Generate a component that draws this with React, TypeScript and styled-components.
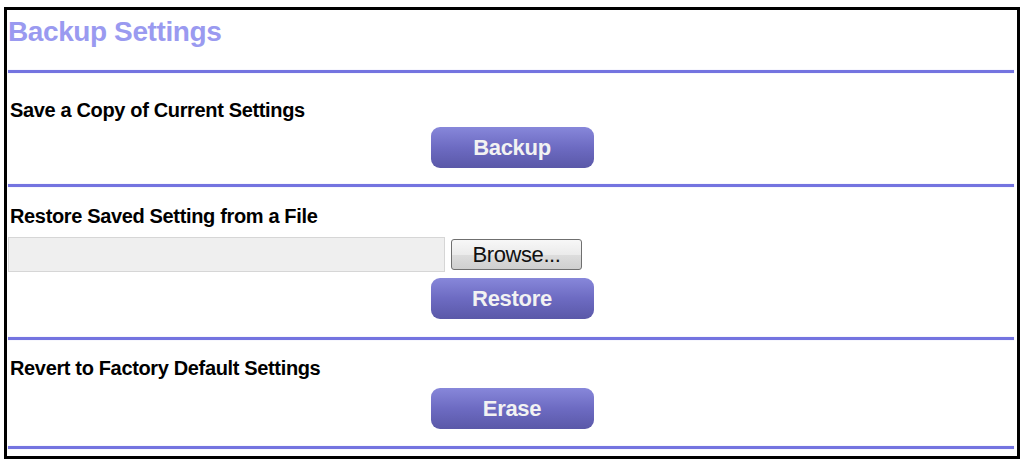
import React from "react";
import styled, { createGlobalStyle } from "styled-components";

const GlobalStyle = createGlobalStyle`
  html, body {
    margin: 0;
    padding: 0;
    background: #ffffff;
  }
  body {
    font-family: "Liberation Sans", Arial, sans-serif;
  }
`;

const Frame = styled.div`
  margin: 7px 0 0 4px;
  width: 1016px;
  box-sizing: border-box;
  border: 3px solid #000;
  background: #fff;
  padding: 0 3px 7px 1px;
`;

const TitleBar = styled.div`
  height: 60px;
  box-sizing: border-box;
  padding-top: 8px;
`;

const Title = styled.h1`
  margin: 0;
  font-size: 28px;
  line-height: 28px;
  letter-spacing: -0.4px;
  font-weight: bold;
  color: #9a9af0;
`;

const Rule = styled.div`
  height: 3px;
  background: #7474e0;
  box-shadow: 0 0 1px #a8a8f0;
`;

const Section = styled.div<{ $top: number; $bottom: number }>`
  padding: ${(p) => p.$top}px 0 ${(p) => p.$bottom}px 2px;
  display: flex;
  flex-direction: column;
`;

const Label = styled.div`
  font-size: 20px;
  line-height: 18px;
  letter-spacing: -0.35px;
  font-weight: bold;
  color: #000;
`;

const ActionButton = styled.button<{ $gap: number }>`
  align-self: center;
  margin-top: ${(p) => p.$gap}px;
  width: 163px;
  height: 41px;
  border: none;
  border-radius: 9px;
  background: linear-gradient(to bottom, #8787da 0%, #6d6bc2 50%, #5a58a8 100%);
  color: #f2f2f2;
  font-family: "Liberation Sans", Arial, sans-serif;
  font-size: 22px;
  letter-spacing: -0.3px;
  font-weight: bold;
  padding: 0;
  cursor: pointer;
`;

const FileRow = styled.div`
  display: flex;
  align-items: center;
  gap: 6px;
  margin-top: 12px;
  margin-left: -2px;
`;

const FileField = styled.div`
  width: 437px;
  height: 35px;
  box-sizing: border-box;
  background: #efefef;
  border: 1px solid #d6d6d6;
`;

const BrowseButton = styled.button`
  width: 131px;
  height: 31px;
  box-sizing: border-box;
  border: 1px solid #6f6f6f;
  border-radius: 3px;
  background: linear-gradient(to bottom, #f7f7f7 0%, #ebebeb 50%, #dddddd 51%, #cfcfcf 100%);
  color: #111;
  font-family: "Liberation Sans", Arial, sans-serif;
  font-size: 22px;
  letter-spacing: -0.4px;
  padding: 0;
`;

export default function App() {
  return (
    <>
      <GlobalStyle />
      <Frame>
        <TitleBar>
          <Title>Backup Settings</Title>
        </TitleBar>
        <Rule />
        <Section $top={28} $bottom={16}>
          <Label>Save a Copy of Current Settings</Label>
          <ActionButton $gap={8}>Backup</ActionButton>
        </Section>
        <Rule />
        <Section $top={20} $bottom={18}>
          <Label>Restore Saved Setting from a File</Label>
          <FileRow>
            <FileField />
            <BrowseButton>Browse...</BrowseButton>
          </FileRow>
          <ActionButton $gap={6}>Restore</ActionButton>
        </Section>
        <Rule />
        <Section $top={19} $bottom={17}>
          <Label>Revert to Factory Default Settings</Label>
          <ActionButton $gap={11}>Erase</ActionButton>
        </Section>
        <Rule />
      </Frame>
    </>
  );
}
